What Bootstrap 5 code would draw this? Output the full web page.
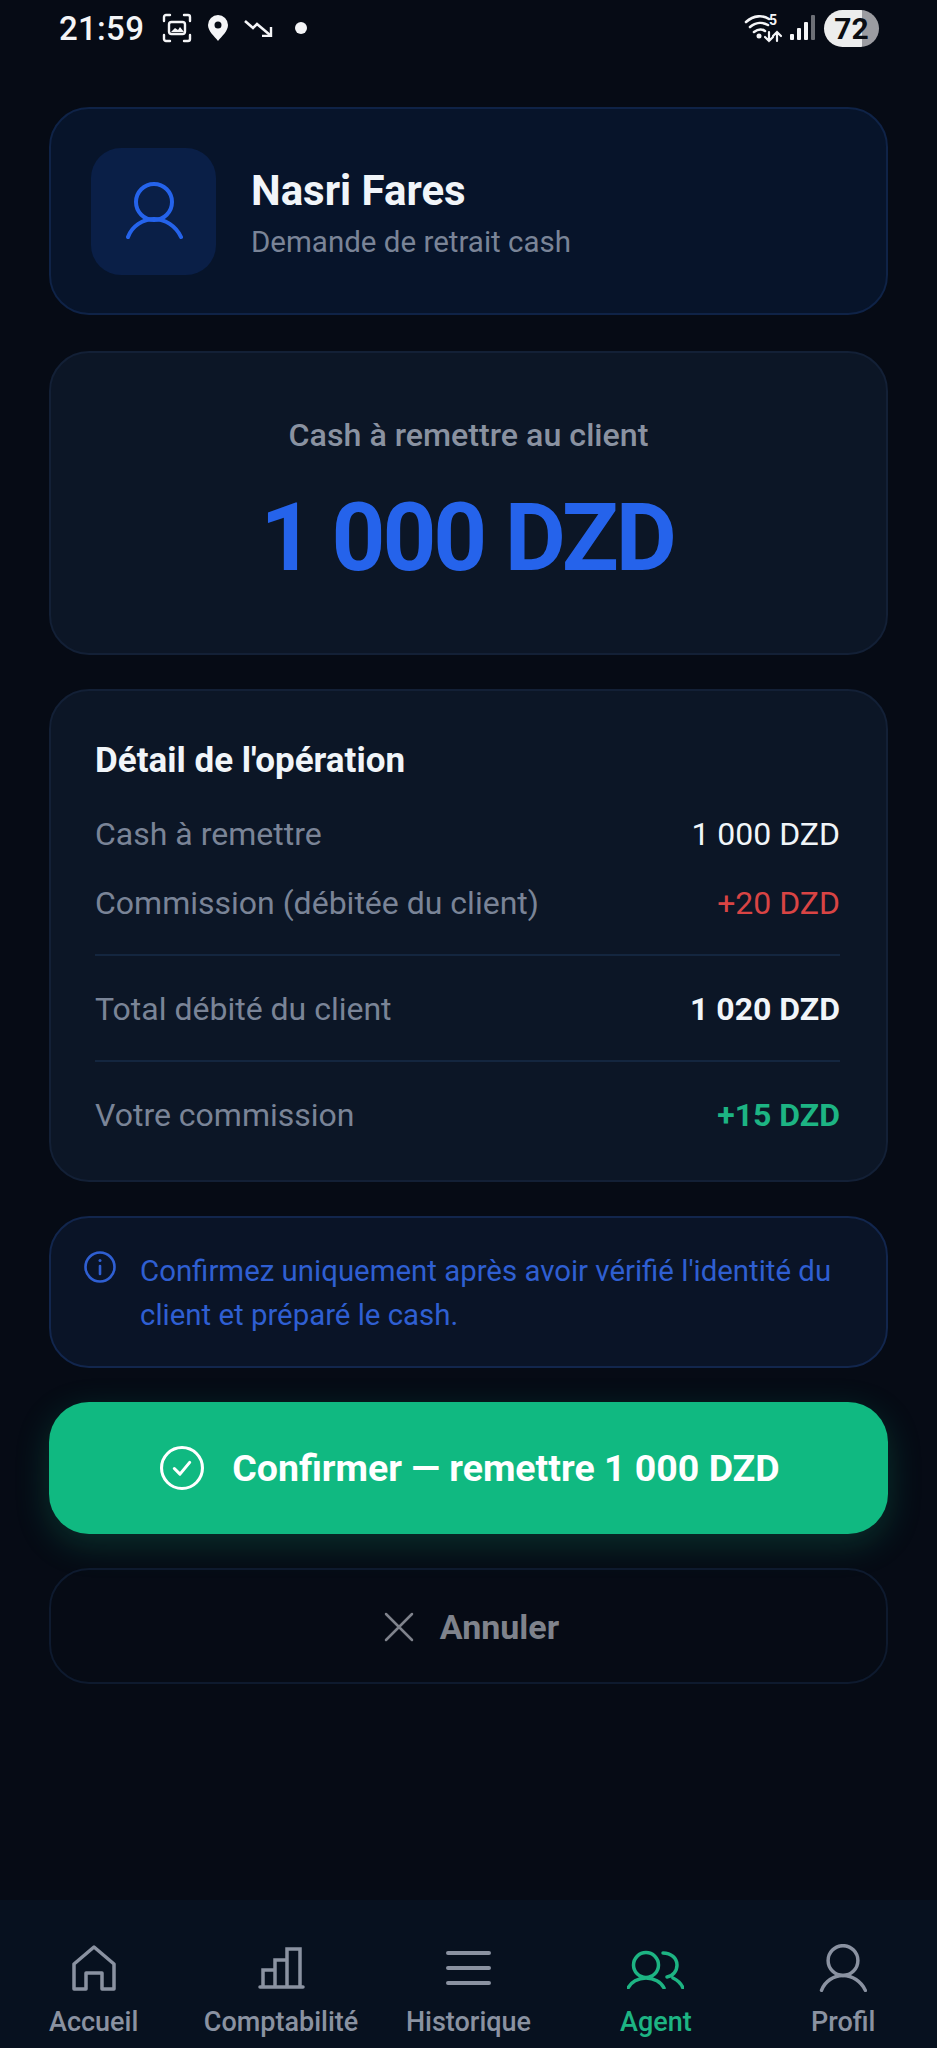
<!DOCTYPE html>
<html lang="fr">
<head>
<meta charset="utf-8">
<title>Retrait cash</title>
<link href="https://cdn.jsdelivr.net/npm/bootstrap@5.3.0/dist/css/bootstrap.min.css" rel="stylesheet">
<style>
html,body{height:100%}
body{background:#060b15;font-family:Roboto,"Liberation Sans",sans-serif;color:#f1f5f9;width:937px;height:2048px;overflow:hidden;display:flex;flex-direction:column}
.sbar{height:56px;padding:0 58px 0 59px;flex:none;color:#f4f5f7}
.sbar-time{font-size:33px;font-weight:500;line-height:1;letter-spacing:.3px}
.sbar-left{gap:0}
.batt{width:55px;height:37px;border-radius:19px;background:linear-gradient(90deg,#eceded 0 69%,#9b9ca1 69%);color:#0b0d12;font-size:30px;font-weight:700;line-height:37px;text-align:center}
.sig5{font-size:14px;font-weight:700;line-height:1;color:#f4f5f7}
.stack{padding:51px 49px 0;gap:34px;flex:1 1 auto}
.panel{border-radius:40px;border:2px solid #132036;background:#0c1626;--bs-card-bg:#0c1626;color:inherit}
.panel-user{height:208px;background:#07142a;border-color:#0f2347;margin-bottom:2px;padding:0 40px;gap:35px}
.avatar{width:125px;height:127px;border-radius:30px;background:#0a1f47}
.avatar-ico{margin-bottom:2px}
.user-txt{margin-top:4px}
.uname{font-size:42px;font-weight:700;line-height:50px;color:#f1f5f9}
.usub{font-size:29.5px;line-height:36px;color:#7a8497;margin-top:8px}
.panel-amt{height:304px;padding-top:64px}
.amt-lbl{font-size:32.2px;font-weight:500;line-height:36px;color:#8a92a1}
.amt-val{font-size:94px;font-weight:700;line-height:110px;color:#2563eb;margin-top:30px;letter-spacing:-3px;padding-right:3px}
.panel-det{height:493px;padding:46px 46px 0 44px}
.det-title{font-size:35px;font-weight:700;line-height:48px;color:#f1f5f9;margin-bottom:29px}
.det-row{font-size:32px;line-height:40px;color:#7a8497}
.det-row+.det-row{margin-top:29px}
.det-rule{border-top:2px solid #14263f;margin:31px 0 33px}
.val-w{color:#f1f5f9}
.val-r{color:#d94444}
.val-g{color:#1db483;font-weight:700}
.val-b{color:#f1f5f9;font-weight:700}
.panel-info{height:152px;background:#0a1427;border-color:#12264d;padding:31px 30px 0 33px;gap:24px}
.info-ico{margin-top:2px}
.info-txt{font-size:29.4px;line-height:44px;color:#2f5fd2}
.btn-go{height:132px;border:0;border-radius:40px;background:#10b981;color:#fff;font-size:37.5px;font-weight:700;gap:28px;padding-left:15px;box-shadow:0 10px 34px rgba(16,185,129,.22)}
.btn-go:hover,.btn-go:active{background:#10b981;color:#fff}
.btn-no{height:116px;border:2px solid #0e1a2e;border-radius:40px;background:transparent;color:#7f838c;font-size:34px;font-weight:700;gap:26px;padding-left:18px;padding-top:8px}
.tabbar{height:148px;background:#07111f;flex:none;margin:0;padding:44px 0 0}
.tabitem{width:20%;height:104px;padding:0;color:#8a92a1;font-size:27px;font-weight:500;line-height:30px}
.tabitem.on{color:#1db483}
.tabico{height:48px;margin-bottom:15px;display:flex;align-items:center}
</style>
</head>
<body>
<div class="sbar d-flex align-items-center justify-content-between">
  <div class="sbar-left d-flex align-items-center">
    <span class="sbar-time">21:59</span>
    <svg width="30" height="30" viewBox="0 0 30 30" fill="none" stroke="#f4f5f7" stroke-width="2.4" stroke-linecap="round" style="margin-left:18px"><path d="M2 8V4a2 2 0 0 1 2-2h4M22 2h4a2 2 0 0 1 2 2v4M28 22v4a2 2 0 0 1-2 2h-4M8 28H4a2 2 0 0 1-2-2v-4"/><rect x="7" y="9" width="16" height="12" rx="2.5"/><path d="M9 19l4-4 3 2 2-3 4 5z" fill="#f4f5f7" stroke="none"/></svg>
    <svg width="20" height="26" viewBox="0 0 20 26" style="margin-left:16px"><path fill="#f4f5f7" fill-rule="evenodd" d="M10 0a10 10 0 0 1 10 10c0 6-6 11-10 16C6 21 0 16 0 10A10 10 0 0 1 10 0zm0 6.500a3.500 3.500 0 1 0 0 7 3.500 3.500 0 0 0 0-7z"/></svg>
    <svg width="29" height="18" viewBox="0 0 29 18" fill="none" stroke="#f4f5f7" stroke-width="2.6" style="margin-left:16px"><path d="M1 2l8 7 4-4 13 11"/><path d="M27 8v9h-9" stroke-width="2.4"/></svg>
    <svg width="12" height="12" viewBox="0 0 12 12" style="margin-left:22px"><circle cx="6" cy="6" r="6" fill="#f4f5f7"/></svg>
  </div>
  <div class="d-flex align-items-center">
    <span class="position-relative d-inline-block" style="width:45px;height:30px">
      <svg width="45" height="30" viewBox="0 0 45 30" fill="none" stroke="#f4f5f7" stroke-width="2.6" stroke-linecap="round"><path d="M2 9c8-7 17-7 23-3M6 14c6-5 13-5 18-2M10 19c4-3 8-3 11-1"/><circle cx="15" cy="23" r="2.500" fill="#f4f5f7" stroke="none"/><path d="M25 19v9M21 24l4 4 4-4M33 28v-9M29 23l4-4 4 4" stroke-width="2.200"/></svg>
      <span class="sig5 position-absolute" style="left:25px;top:0">5</span>
    </span>
    <svg width="26" height="26" viewBox="0 0 26 26" style="margin-left:1px"><rect x="0" y="19" width="4" height="6" rx="1" fill="#f4f5f7"/><rect x="7" y="13" width="4" height="12" rx="1" fill="#f4f5f7"/><rect x="14" y="7" width="4" height="18" rx="1" fill="#f4f5f7"/><rect x="21" y="0" width="4" height="25" rx="1" fill="#6c6f76"/></svg>
    <span class="batt ms-2">72</span>
  </div>
</div>

<main class="stack d-flex flex-column">
  <section class="card panel panel-user flex-row align-items-center">
    <div class="avatar d-flex align-items-center justify-content-center flex-shrink-0">
      <svg class="avatar-ico" width="58" height="58" viewBox="0 0 58 58" fill="none" stroke="#2563eb" stroke-width="4" stroke-linecap="round"><circle cx="29" cy="21" r="18"/><path d="M3 56C7 45 18 38 29 38s22 7 27 18"/></svg>
    </div>
    <div class="user-txt">
      <div class="uname">Nasri Fares</div>
      <div class="usub">Demande de retrait cash</div>
    </div>
  </section>

  <section class="card panel panel-amt text-center">
    <div class="amt-lbl">Cash à remettre au client</div>
    <div class="amt-val">1 000 DZD</div>
  </section>

  <section class="card panel panel-det">
    <div class="det-title">Détail de l'opération</div>
    <div class="det-row d-flex justify-content-between"><span>Cash à remettre</span><span class="val-w">1 000 DZD</span></div>
    <div class="det-row d-flex justify-content-between"><span>Commission (débitée du client)</span><span class="val-r">+20 DZD</span></div>
    <div class="det-rule"></div>
    <div class="det-row d-flex justify-content-between"><span>Total débité du client</span><span class="val-b">1 020 DZD</span></div>
    <div class="det-rule"></div>
    <div class="det-row d-flex justify-content-between"><span>Votre commission</span><span class="val-g">+15 DZD</span></div>
  </section>

  <section class="card panel panel-info flex-row">
    <svg class="info-ico flex-shrink-0" width="32" height="32" viewBox="0 0 32 32" fill="none" stroke="#2f5fd2" stroke-width="2.600" stroke-linecap="round"><circle cx="16" cy="16" r="14.500"/><path d="M16 15v8"/><circle cx="16" cy="9.500" r="1.500" fill="#2f5fd2" stroke="none"/></svg>
    <div class="info-txt">Confirmez uniquement après avoir vérifié l'identité du client et préparé le cash.</div>
  </section>

  <button type="button" class="btn btn-go d-flex align-items-center justify-content-center">
    <svg width="44" height="44" viewBox="0 0 43 43" fill="none" stroke="#fff" stroke-width="3" stroke-linecap="round" stroke-linejoin="round"><circle cx="21.500" cy="21.500" r="20"/><path d="M14 22l5.500 5.500L29 16"/></svg>
    <span>Confirmer — remettre 1 000 DZD</span>
  </button>

  <button type="button" class="btn btn-no d-flex align-items-center justify-content-center">
    <svg width="30" height="30" viewBox="0 0 30 30" fill="none" stroke="#7f838c" stroke-width="2.500" stroke-linecap="round"><path d="M2 2l26 26M28 2L2 28"/></svg>
    <span>Annuler</span>
  </button>
</main>

<nav class="nav tabbar">
  <a class="nav-link tabitem d-flex flex-column align-items-center" href="#">
    <span class="tabico"><svg width="44" height="46" viewBox="0 0 44 46" fill="none" stroke="#8a92a1" stroke-width="3.500" stroke-linejoin="round"><path d="M2 44V19L22 2l20 17v25H30V28H14v16z"/></svg></span>
    <span>Accueil</span>
  </a>
  <a class="nav-link tabitem d-flex flex-column align-items-center" href="#">
    <span class="tabico"><svg width="47" height="42" viewBox="0 0 47 42" fill="none" stroke="#8a92a1" stroke-width="3.500" stroke-linecap="round"><path d="M2 40h43M5 40V23h12v17M17 40V13h12v27M29 40V2h13v38"/></svg></span>
    <span>Comptabilité</span>
  </a>
  <a class="nav-link tabitem d-flex flex-column align-items-center" href="#">
    <span class="tabico"><svg width="45" height="36" viewBox="0 0 45 36" fill="none" stroke="#8a92a1" stroke-width="4" stroke-linecap="round"><path d="M2 3h41M2 18h41M2 33h41"/></svg></span>
    <span>Historique</span>
  </a>
  <a class="nav-link tabitem on d-flex flex-column align-items-center" href="#">
    <span class="tabico"><svg width="57" height="42" viewBox="0 -4 57 42" fill="none" stroke="#1db483" stroke-width="3.500" stroke-linecap="round"><circle cx="19" cy="14" r="12.500"/><path d="M1 37c3-6 10-10 18-10s15 4 18 10"/><path d="M36 2c8 0 14 5 14 12 0 6-4 11-10 12M46 27c4 2 8 5 10 10"/></svg></span>
    <span>Agent</span>
  </a>
  <a class="nav-link tabitem d-flex flex-column align-items-center" href="#">
    <span class="tabico"><svg width="48" height="48" viewBox="0 0 58 58" fill="none" stroke="#8a92a1" stroke-width="4.200" stroke-linecap="round"><circle cx="29" cy="20" r="18"/><path d="M3 56C7 45 18 38 29 38s22 7 27 18"/></svg></span>
    <span>Profil</span>
  </a>
</nav>
</body>
</html>
